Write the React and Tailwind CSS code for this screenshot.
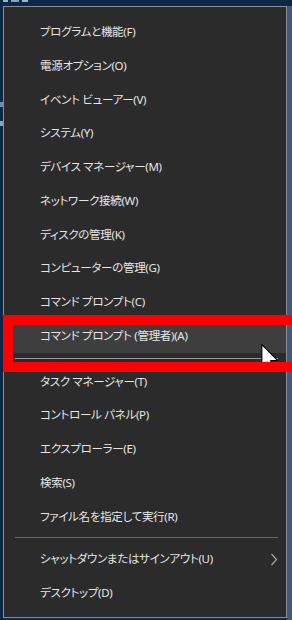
import React from "react";

const groups = [
  [
    "プログラムと機能(F)",
    "電源オプション(O)",
    "イベント ビューアー(V)",
    "システム(Y)",
    "デバイス マネージャー(M)",
    "ネットワーク接続(W)",
    "ディスクの管理(K)",
    "コンピューターの管理(G)",
    "コマンド プロンプト(C)",
    "コマンド プロンプト (管理者)(A)",
  ],
  [
    "タスク マネージャー(T)",
    "コントロール パネル(P)",
    "エクスプローラー(E)",
    "検索(S)",
    "ファイル名を指定して実行(R)",
  ],
  ["シャットダウンまたはサインアウト(U)", "デスクトップ(D)"],
];

function Row({ label, active, sub }) {
  return (
    <div
      className={
        "h-[33.75px] flex items-center justify-between pl-[36px] pr-[8px] " +
        (active ? "bg-[#3e3e3e]" : "")
      }
    >
      <span className="text-[11.5px] tracking-[-0.3px] text-[#e6e6e6] whitespace-nowrap leading-none">{label}</span>
      {sub && (
        <svg width="8" height="13" viewBox="0 0 8 13" className="block">
          <polyline points="1.5,1 6.5,6.5 1.5,12" fill="none" stroke="#a8a8a8" strokeWidth="1.2" />
        </svg>
      )}
    </div>
  );
}

export default function App() {
  return (
    <div
      className="relative w-[292px] h-[620px] overflow-hidden bg-[#0f2747] flex flex-col [font-family:'Noto_Sans','Noto_Sans_CJK_JP',sans-serif] [font-feature-settings:'palt']"
    >
      <div className="h-[6px] shrink-0 flex items-start gap-[3px] pl-[3px]">
        <div className="h-[2px] w-[5px] bg-[#9fb2c8]" />
        <div className="h-[2px] w-[8px] bg-[#8aa0ba]" />
        <div className="h-[2px] w-[6px] bg-[#9fb2c8]" />
      </div>
      <div className="flex flex-1">
        <div className="w-[3px] shrink-0 flex flex-col">
          <div className="h-[96px]" />
          <div className="h-[5px] w-[3px] bg-[#6f8bb0]" />
          <div className="h-[14px]" />
          <div className="h-[5px] w-[3px] bg-[#8aa3c4]" />
        </div>
        <div className="w-[284px] h-[612px] shrink-0 border border-[#8a8e94] bg-[#2b2b2b] pt-[8px]">
          {groups[0].map((l, i) => (
            <Row key={l} label={l} active={i === 9} />
          ))}
          <div className="h-[12px] flex items-center">
            <div className="h-px flex-1 ml-[11px] mr-[8px] bg-[#9a9a9a]" />
          </div>
          {groups[1].map((l) => (
            <Row key={l} label={l} />
          ))}
          <div className="h-[9px] flex items-center">
            <div className="h-px flex-1 ml-[11px] mr-[8px] bg-[#666666]" />
          </div>
          <Row label={groups[2][0]} sub />
          <Row label={groups[2][1]} />
        </div>
        <div className="flex-1 bg-[#44597a]" />
      </div>

      <svg
        className="absolute left-[261px] top-[344px]"
        width="18"
        height="27"
        viewBox="0 0 12.5 19"
      >
        <path
          d="M0.5 0.5 L0.5 16.5 L4.3 12.8 L7 18.5 L9.3 17.5 L6.7 11.8 L11.5 11.5 Z"
          fill="#ffffff"
          stroke="#000000"
          strokeWidth="0.8"
          strokeLinejoin="miter"
        />
      </svg>

      <div className="absolute left-[3px] top-[315px] w-[300px] h-[57px] border-[10px] border-[#ff0000]" />
    </div>
  );
}
